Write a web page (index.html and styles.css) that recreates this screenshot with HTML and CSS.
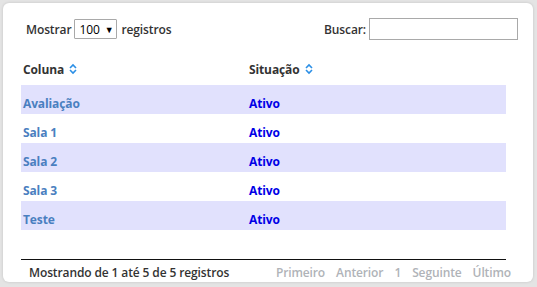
FILE: index.html
```html
<!DOCTYPE html>
<html lang="pt">
<head>
<meta charset="utf-8">
<link rel="stylesheet" href="styles.css">
</head>
<body>
<div class="card">
  <div class="toolbar">
    <label class="length">Mostrar
      <span class="select">100 <span class="caret">▼</span></span>
      registros</label>
    <label class="search">Buscar: <span class="input"></span></label>
  </div>
  <table class="grid">
    <thead>
      <tr>
        <th class="c1">Coluna <svg class="sort" viewBox="0 0 8 12" width="8" height="12"><path d="M1 5 L4 2 L7 5 M1 7 L4 10 L7 7" fill="none" stroke="#2b8fe6" stroke-width="1.6"/></svg></th>
        <th>Situação <svg class="sort" viewBox="0 0 8 12" width="8" height="12"><path d="M1 5 L4 2 L7 5 M1 7 L4 10 L7 7" fill="none" stroke="#2b8fe6" stroke-width="1.6"/></svg></th>
      </tr>
    </thead>
    <tbody>
      <tr class="odd"><td class="name">Avaliação</td><td class="status">Ativo</td></tr>
      <tr><td class="name">Sala 1</td><td class="status">Ativo</td></tr>
      <tr class="odd"><td class="name">Sala 2</td><td class="status">Ativo</td></tr>
      <tr><td class="name">Sala 3</td><td class="status">Ativo</td></tr>
      <tr class="odd"><td class="name">Teste</td><td class="status">Ativo</td></tr>
    </tbody>
  </table>
  <div class="footer">
    <div class="info">Mostrando de 1 até 5 de 5 registros</div>
    <div class="pager">
      <span>Primeiro</span><span>Anterior</span><span>1</span><span>Seguinte</span><span>Último</span>
    </div>
  </div>
</div>
</body>
</html>
```
FILE: styles.css
```css
html, body { margin: 0; padding: 0; }
body {
  background: #e4e4e4;
  font-family: "Open Sans", "Noto Sans", sans-serif;
  font-size: 12px;
  letter-spacing: -0.12px;
  color: #333;
  width: 537px;
  height: 287px;
  overflow: hidden;
}
.card {
  box-sizing: border-box;
  margin: 3px 0 0 3px;
  width: 530px;
  height: 279px;
  background: #fff;
  border-radius: 6px;
  box-shadow: 0 0 3px rgba(0,0,0,0.15);
  padding: 15px 27px 0 18px;
}
.toolbar {
  display: flex;
  justify-content: space-between;
  align-items: center;
  height: 22px;
  margin-right: -12px;
  padding-left: 5px;
  font-weight: 600;
  color: #333;
}
.length, .search { display: flex; align-items: center; }
.select {
  display: inline-flex;
  align-items: center;
  box-sizing: border-box;
  height: 20px;
  width: 43px;
  border: 1px solid #a9a9a9;
  border-radius: 1px;
  margin: 0 4px 0 3px;
  padding-left: 4px;
  font-weight: 400;
  color: #000;
}
.caret { font-size: 9px; margin-left: 5px; }
.input {
  display: inline-block;
  box-sizing: border-box;
  width: 149px;
  height: 22px;
  border: 1px solid #a9a9a9;
  margin-left: 3px;
}
.grid {
  width: 485px;
  border-collapse: collapse;
  margin-top: 13px;
}
.grid th {
  text-align: left;
  font-weight: 700;
  color: #333;
  height: 32px;
  padding: 0 2px;
  vertical-align: middle;
}
.grid th.c1 { width: 222px; }
.sort { vertical-align: -1px; margin-left: 2px; }
.grid td {
  box-sizing: border-box;
  height: 29px;
  padding: 7px 2px 0;
  font-weight: 700;
  vertical-align: middle;
}
.grid tr.odd td { background: #e1e1fd; }
.name { color: #4a7fc0; }
.status { color: #0000e6; }
.footer {
  margin-top: 29px;
  width: 485px;
  border-top: 1px solid #111;
  display: flex;
  justify-content: space-between;
  align-items: center;
  height: 22px;
  padding-top: 1px;
  font-weight: 600;
}
.info { padding-left: 8px; color: #333; }
.pager { display: flex; gap: 11px; color: #b0b3b8; margin-right: -5px; }
```
